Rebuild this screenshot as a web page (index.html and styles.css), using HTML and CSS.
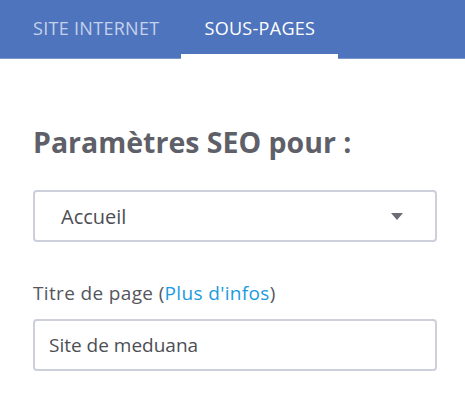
FILE: index.html
```html
<!DOCTYPE html>
<html lang="fr">
<head>
  <meta charset="UTF-8" />
  <title>Paramètres SEO</title>
  <link rel="stylesheet" href="styles.css">
</head>
<body>
  <nav class="tabs">
    <a class="tab" href="#">SITE INTERNET</a>
    <a class="tab active" href="#">SOUS-PAGES</a>
  </nav>

  <main class="panel">
    <h2 class="panel-title">Paramètres SEO pour :</h2>

    <div class="select-box">
      <span>Accueil</span>
      <svg class="caret" width="12" height="7" viewBox="0 0 12 7"><path d="M0 0h12L6 7z" fill="#6b6c74"/></svg>
    </div>

    <label class="field-label">Titre de page (<a href="#">Plus d'infos</a>)</label>
    <div class="text-box">Site de meduana</div>
  </main>
</body>
</html>
```

FILE: styles.css
```css
body {
  margin: 0;
  font-family: 'Open Sans', sans-serif;
  background: #fff;
  color: #55565e;
}
.tabs {
  display: flex;
  height: 59px;
  background: #4e74be;
  padding-left: 11px;
  border-bottom: 1px solid #7c97cf;
  box-sizing: border-box;
}
.tab {
  display: flex;
  align-items: center;
  padding: 0 22px 2px;
  font-size: 18px;
  letter-spacing: 0.3px;
  color: #c5d1ea;
  text-decoration: none;
}
.tab.active {
  color: #fff;
  position: relative;
  padding: 0 23px 2px;
}
.tab.active::after {
  content: "";
  position: absolute;
  left: 0;
  right: 0;
  bottom: -1px;
  height: 5px;
  background: #fff;
}
.panel {
  padding: 0 28px 0 33px;
}
.panel-title {
  margin: 63px 0 28px;
  font-size: 28.5px;
  font-weight: 700;
  color: #5e5f68;
  line-height: 40px;
}
.select-box,
.text-box {
  display: flex;
  align-items: center;
  height: 52px;
  border: 2px solid #cdd0dc;
  border-radius: 4px;
  box-sizing: border-box;
  font-size: 19px;
  color: #4d4e55;
}
.select-box {
  justify-content: space-between;
  padding: 0 32px 0 26px;
  font-size: 20px;
}
.text-box {
  padding: 0 14px;
}
.field-label {
  display: block;
  margin: 38px 0 13px;
  font-size: 19px;
  letter-spacing: 0.35px;
  line-height: 26px;
  color: #55565e;
}
.field-label a {
  color: #1a9be0;
  text-decoration: none;
}
```
